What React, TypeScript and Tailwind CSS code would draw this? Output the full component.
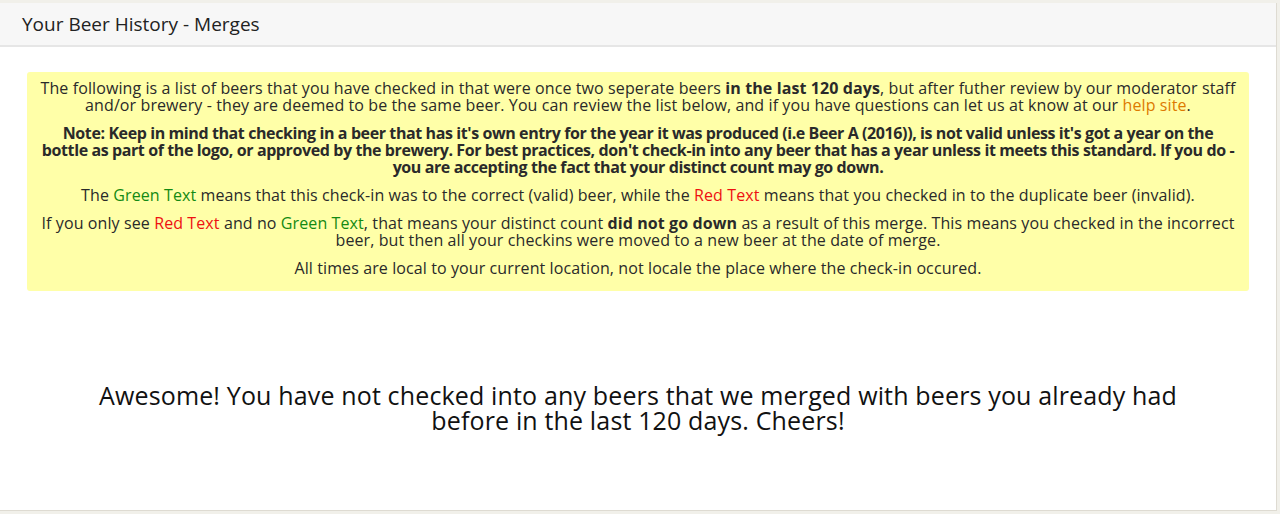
export default function App() {
  return (
    <div className="h-[514px] bg-[#f1f0ea] font-['Open_Sans',sans-serif] text-[#2a2a2a]">
      <div className="pt-[3px] pr-[3px] pb-[3px]">
        <div className="h-[508px] bg-white border-r border-b border-[#dedbd2]">
          <div className="h-[44px] bg-[#f7f7f7] border-b-2 border-[#e6e6e6] flex items-center px-[22px]">
            <h1 className="text-[19px] text-[#222]">Your Beer History - Merges</h1>
          </div>

          <div className="px-[27px] pt-[25px]">
            <div className="bg-[#ffffa8] rounded-[3px] px-[12px] pt-[8px] pb-[14px] text-center text-[16px] leading-[17px] tracking-[0.1px]">
              <p className="mb-[11px]">
                The following is a list of beers that you have checked in that were once two seperate beers{' '}
                <b>in the last 120 days</b>, but after futher review by our moderator staff and/or brewery - they are
                deemed to be the same beer. You can review the list below, and if you have questions can let us at know
                at our <a className="text-[#dd7a00]">help site</a>.
              </p>
              <p className="mb-[11px] font-bold tracking-[-0.4px]">
                Note: Keep in mind that checking in a beer that has it's own entry for the year it was produced (i.e Beer A
                (2016)), is not valid unless it's got a year on the bottle as part of the logo, or approved by the brewery.
                For best practices, don't check-in into any beer that has a year unless it meets this standard. If you do -
                you are accepting the fact that your distinct count may go down.
              </p>
              <p className="mb-[11px]">
                The <span className="text-[#138a13]">Green Text</span> means that this check-in was to the correct (valid)
                beer, while the <span className="text-[#ee1111]">Red Text</span> means that you checked in to the
                duplicate beer (invalid).
              </p>
              <p className="mb-[11px]">
                If you only see <span className="text-[#ee1111]">Red Text</span> and no{' '}
                <span className="text-[#138a13]">Green Text</span>, that means your distinct count <b>did not go down</b>{' '}
                as a result of this merge. This means you checked in the incorrect beer, but then all your checkins were
                moved to a new beer at the date of merge.
              </p>
              <p>All times are local to your current location, not locale the place where the check-in occured.</p>
            </div>
          </div>

          <div className="pt-[92px] px-[80px] text-center text-[25px] leading-[25px] tracking-[0.15px] text-[#111]">
            Awesome! You have not checked into any beers that we merged with beers you already had before in the last 120
            days. Cheers!
          </div>
        </div>
      </div>
    </div>
  );
}
